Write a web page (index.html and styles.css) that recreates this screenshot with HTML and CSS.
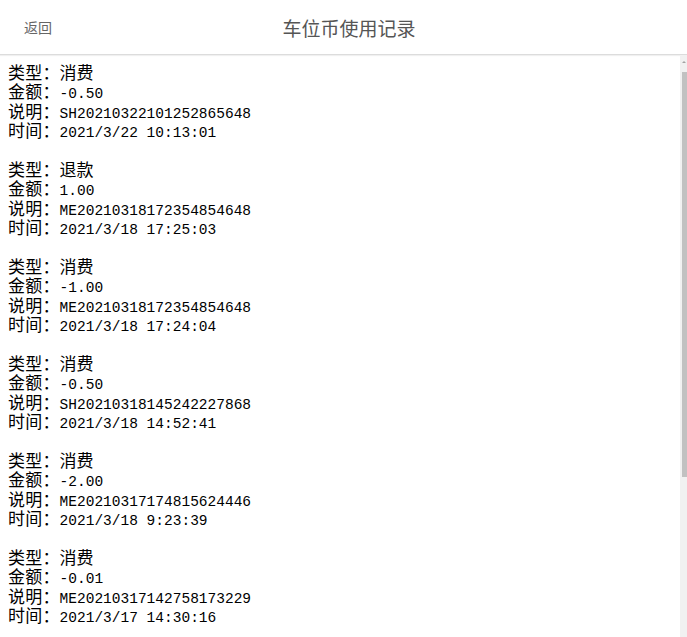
FILE: index.html
```html
<!DOCTYPE html>
<html lang="zh-CN">
<head>
    <meta charset="UTF-8">
    <meta name="viewport" content="width=device-width, initial-scale=1.0">
    <title>车位币使用记录</title>
    <link rel="stylesheet" href="styles.css">
</head>
<body>
    <div class="top-bar">
        <a class="back-link" href="#">返回</a>
        <h1 class="page-title">车位币使用记录</h1>
        <span></span>
    </div>

    <div class="list-wrap">
        <div class="record-list">
            <div class="record">
                <div class="row"><span class="label">类型：</span><span class="value cn">消费</span></div>
                <div class="row"><span class="label">金额：</span><span class="value">-0.50</span></div>
                <div class="row"><span class="label">说明：</span><span class="value">SH20210322101252865648</span></div>
                <div class="row"><span class="label">时间：</span><span class="value">2021/3/22 10:13:01</span></div>
            </div>
            <div class="record">
                <div class="row"><span class="label">类型：</span><span class="value cn">退款</span></div>
                <div class="row"><span class="label">金额：</span><span class="value">1.00</span></div>
                <div class="row"><span class="label">说明：</span><span class="value">ME20210318172354854648</span></div>
                <div class="row"><span class="label">时间：</span><span class="value">2021/3/18 17:25:03</span></div>
            </div>
            <div class="record">
                <div class="row"><span class="label">类型：</span><span class="value cn">消费</span></div>
                <div class="row"><span class="label">金额：</span><span class="value">-1.00</span></div>
                <div class="row"><span class="label">说明：</span><span class="value">ME20210318172354854648</span></div>
                <div class="row"><span class="label">时间：</span><span class="value">2021/3/18 17:24:04</span></div>
            </div>
            <div class="record">
                <div class="row"><span class="label">类型：</span><span class="value cn">消费</span></div>
                <div class="row"><span class="label">金额：</span><span class="value">-0.50</span></div>
                <div class="row"><span class="label">说明：</span><span class="value">SH20210318145242227868</span></div>
                <div class="row"><span class="label">时间：</span><span class="value">2021/3/18 14:52:41</span></div>
            </div>
            <div class="record">
                <div class="row"><span class="label">类型：</span><span class="value cn">消费</span></div>
                <div class="row"><span class="label">金额：</span><span class="value">-2.00</span></div>
                <div class="row"><span class="label">说明：</span><span class="value">ME20210317174815624446</span></div>
                <div class="row"><span class="label">时间：</span><span class="value">2021/3/18 9:23:39</span></div>
            </div>
            <div class="record">
                <div class="row"><span class="label">类型：</span><span class="value cn">消费</span></div>
                <div class="row"><span class="label">金额：</span><span class="value">-0.01</span></div>
                <div class="row"><span class="label">说明：</span><span class="value">ME20210317142758173229</span></div>
                <div class="row"><span class="label">时间：</span><span class="value">2021/3/17 14:30:16</span></div>
            </div>
            <div class="record">
                <div class="row"><span class="label">类型：</span><span class="value cn">充值</span></div>
                <div class="row"><span class="label">金额：</span><span class="value">10.00</span></div>
                <div class="row"><span class="label">说明：</span><span class="value">CZ20210317142511093817</span></div>
                <div class="row"><span class="label">时间：</span><span class="value">2021/3/17 14:25:11</span></div>
            </div>
            <div class="record">
                <div class="row"><span class="label">类型：</span><span class="value cn">消费</span></div>
                <div class="row"><span class="label">金额：</span><span class="value">-0.50</span></div>
                <div class="row"><span class="label">说明：</span><span class="value">SH20210316091833520147</span></div>
                <div class="row"><span class="label">时间：</span><span class="value">2021/3/16 9:18:33</span></div>
            </div>
        </div>
        <!-- scrollbar drawn over the list edge -->
        <div class="scroll-rail">
            <div class="scroll-arrow"></div>
            <div class="scroll-thumb"></div>
        </div>
    </div>
</body>
</html>
```

FILE: styles.css
```css
html, body {
    height: 100%;
}
body {
    margin: 0;
    display: flex;
    flex-direction: column;
    background-color: #ffffff;
    color: #000;
    font-family: "Noto Sans CJK SC", sans-serif;
}
.top-bar {
    flex: 0 0 auto;
    height: 54px;
    display: grid;
    grid-template-columns: 1fr auto 1fr;
    align-items: center;
    border-bottom: 1px solid #dcdcdc;
    box-shadow: 0 1px 1px rgba(0, 0, 0, 0.06);
    padding-left: 11px;
}
.back-link {
    justify-self: start;
    margin-left: 13px;
    font-size: 14px;
    color: #666;
    text-decoration: none;
}
.page-title {
    margin: 0;
    font-size: 19px;
    font-weight: normal;
    color: #555;
}
.list-wrap {
    flex: 1 1 auto;
    position: relative;
    overflow: hidden;
}
.record-list {
    height: 100%;
    overflow-y: auto;
    box-sizing: border-box;
    padding: 7px 8px 0;
}
.record {
    margin-bottom: 19.4px;
}
.row {
    display: flex;
    align-items: baseline;
    height: 19.4px;
    line-height: 19.4px;
    white-space: nowrap;
}
.label {
    font-size: 17px;
    letter-spacing: 0.2px;
}
.value {
    font-family: "Liberation Mono", "Noto Sans CJK SC", monospace;
    font-size: 14.5px;
}
.value.cn {
    font-family: "Noto Sans CJK SC", sans-serif;
    font-size: 17px;
}
.scroll-rail {
    position: absolute;
    top: 0;
    right: 0;
    bottom: 0;
    width: 7px;
    background-color: #f1f1f1;
    display: flex;
    flex-direction: column;
}
.scroll-arrow {
    height: 17px;
    position: relative;
}
.scroll-arrow::after {
    content: "";
    position: absolute;
    left: 2px;
    top: 6px;
    border-left: 2px solid transparent;
    border-right: 2px solid transparent;
    border-bottom: 2px solid #a3a3a3;
}
.scroll-thumb {
    height: 405px;
    margin-left: 2px;
    background-color: #c1c1c1;
}
```
